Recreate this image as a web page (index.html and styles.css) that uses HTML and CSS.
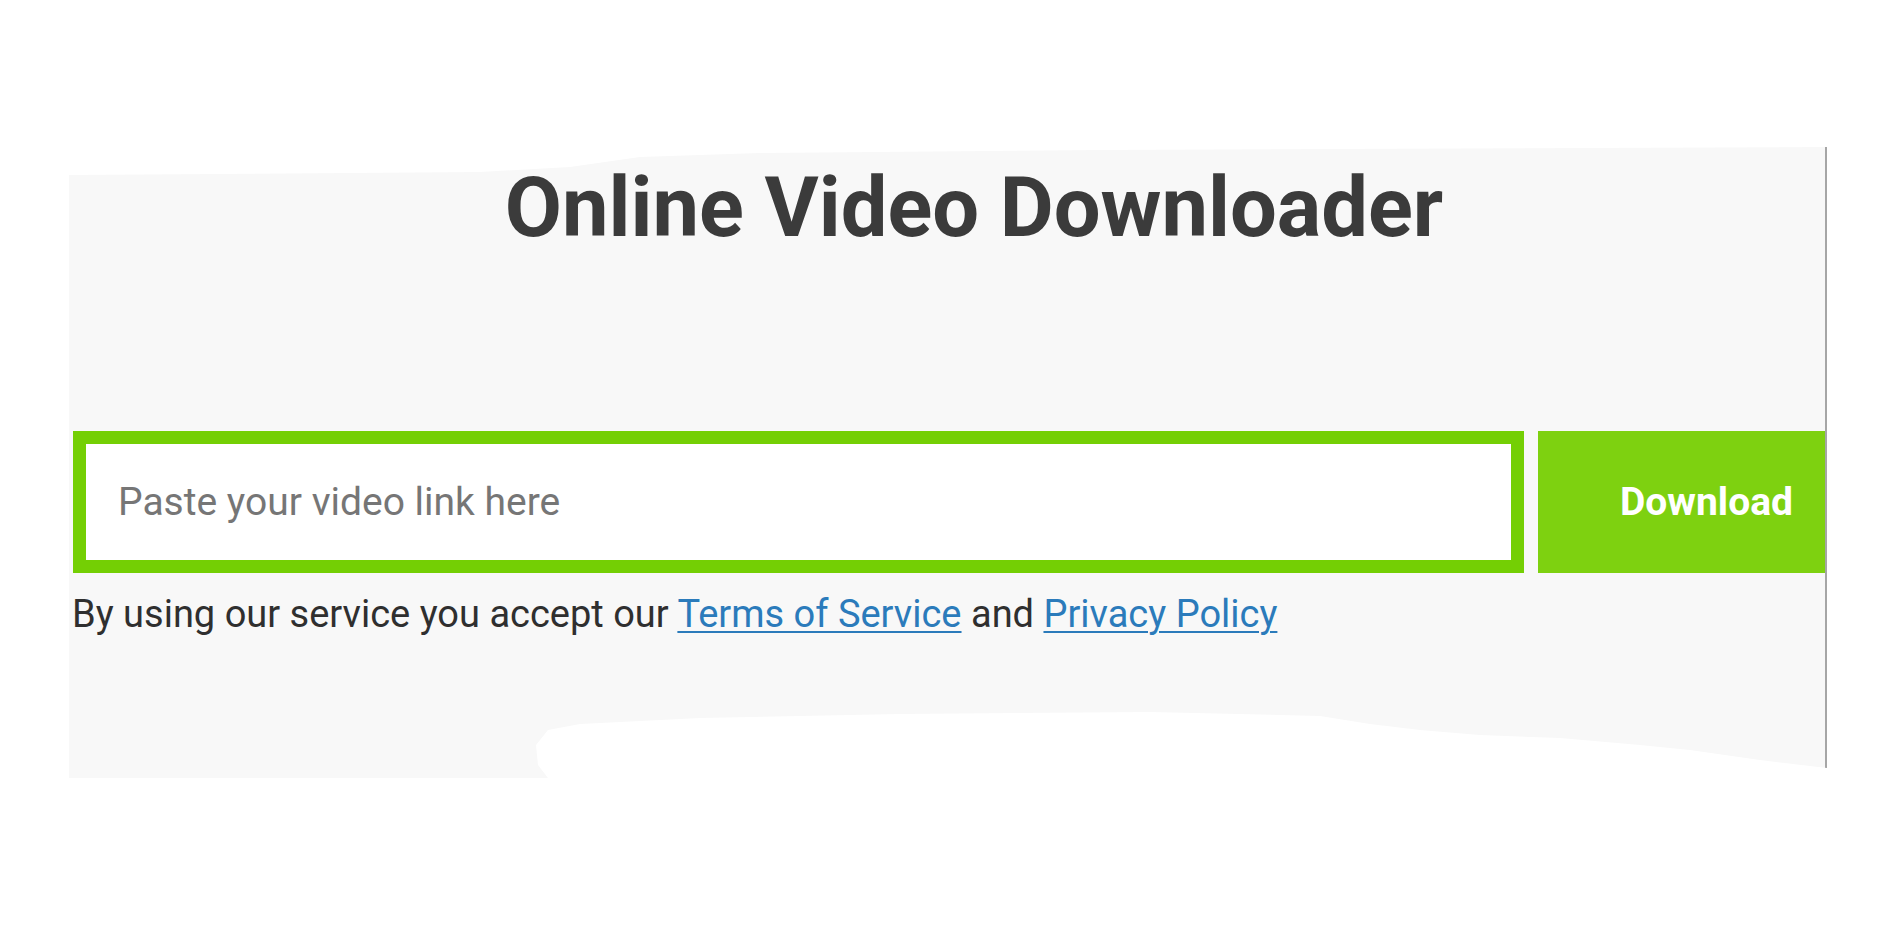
FILE: index.html
```html
<!DOCTYPE html>
<html lang="en">
<head>
    <meta charset="UTF-8">
    <meta name="viewport" content="width=device-width, initial-scale=1.0">
    <title>Online Video Downloader</title>
    <link rel="stylesheet" href="styles.css">
</head>
<body>
    <div class="page">
        <section class="panel">
            <div class="content">
                <h1 class="title">Online Video Downloader</h1>
                <form class="download-form" onsubmit="return false;">
                    <input type="text" class="link-input" placeholder="Paste your video link here">
                    <button type="submit" class="download-button">Download</button>
                </form>
                <p class="terms">
                    By using our service you accept our <a href="#">Terms of Service</a> and <a href="#">Privacy Policy</a>
                </p>
            </div>
        </section>
    </div>
</body>
</html>
```

FILE: styles.css
```css
* {
    margin: 0;
    padding: 0;
    box-sizing: border-box;
    font-family: Roboto, "Liberation Sans", sans-serif;
}

body {
    background: #fff;
}

.page {
    padding: 147px 0 0 69px;
}

/* grey panel, cut off like a cropped screenshot */
.panel {
    width: 1758px;
    height: 631px;
    background: #f8f8f8;
    border-right: 2px solid #a6a6a6;
    overflow: hidden;
    clip-path: polygon(
        0 28px, 411px 25px, 501px 20px, 571px 10px, 691px 6px, 1031px 3px, 1758px 0,
        1758px 621px, 1691px 613px, 1621px 603px, 1571px 598px, 1491px 591px,
        1411px 588px, 1351px 583px, 1301px 577px, 1251px 569px, 1081px 565px,
        831px 567px, 631px 571px, 511px 577px, 479px 583px, 467px 598px,
        469px 618px, 479px 631px, 0 631px
    );
}

.content {
    width: 1810px;
    padding: 11px 4px 0;
}

.title {
    font-size: 83px;
    font-weight: 700;
    line-height: 1.2;
    color: #3b3b3b;
    text-align: center;
}

.download-form {
    display: flex;
    gap: 14px;
    margin-top: 173px;
}

.link-input {
    flex: 1;
    height: 142px;
    border: 13px solid #74cf04;
    background: #fff;
    padding: 0 32px;
    font-size: 39px;
    color: #333;
    outline: none;
}

.link-input::placeholder {
    color: #767676;
}

.download-button {
    width: 337px;
    height: 142px;
    border: none;
    background: #7ed110;
    color: #fff;
    font-size: 39px;
    font-weight: 700;
    cursor: pointer;
}

.terms {
    margin-top: 19px;
    margin-left: -1px;
    font-size: 38px;
    line-height: 1.2;
    color: #2f2f2f;
    white-space: nowrap;
}

.terms a {
    color: #2b7bbb;
    text-decoration: underline;
    text-decoration-thickness: 2px;
    text-underline-offset: 4px;
}
```
